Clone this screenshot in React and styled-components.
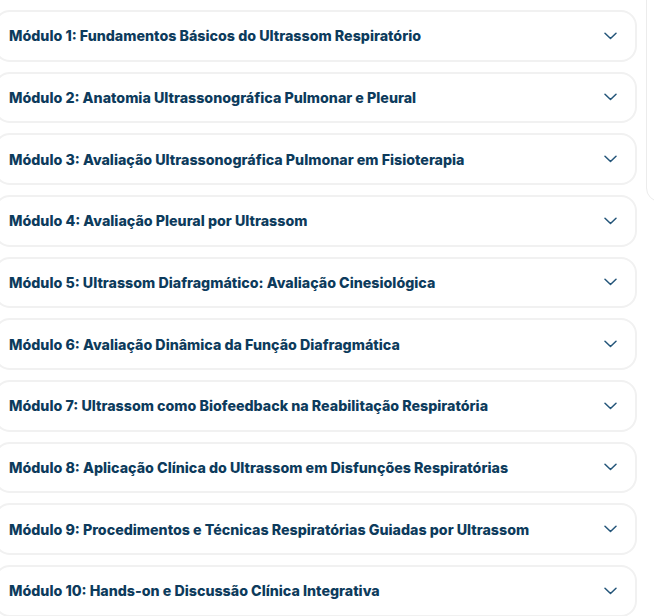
import React from 'react'
import styled, { createGlobalStyle } from 'styled-components'

const Global = createGlobalStyle`
  body {
    margin: 0;
    background: #ffffff;
    overflow: hidden;
    font-family: Inter, "Noto Sans", sans-serif;
  }
`

const Viewport = styled.div`
  width: 654px;
  height: 616px;
  overflow: hidden;
`

const Page = styled.div`
  display: flex;
  align-items: flex-start;
  gap: 9px;
  margin-left: -6px;
`

const List = styled.div`
  flex: 0 0 643px;
  display: flex;
  flex-direction: column;
  gap: 10px;
  padding-top: 10px;
`

const Item = styled.div`
  box-sizing: border-box;
  height: 51.67px;
  border: 2px solid #f1f1f1;
  border-radius: 16px;
  background: #fff;
  display: flex;
  align-items: center;
  justify-content: space-between;
  padding: 0 18px 0 13px;
  cursor: pointer;
`

const Title = styled.h3`
  margin: 0;
  font-family: Inter, "Noto Sans", sans-serif;
  font-weight: 800;
  font-size: 14.25px;
  letter-spacing: 0;
  color: #0d3b5c;
`

const Side = styled.aside`
  flex: 0 0 240px;
  box-sizing: border-box;
  height: 222px;
  margin-top: -20px;
  border: 1px solid #ececec;
  border-radius: 14px;
`

const Chevron = () =>
  <svg width="13" height="8" viewBox="0 0 13 8" fill="none">
    <path d="M1 1.2 6.5 6.5 12 1.2" stroke="#25567a" strokeWidth="1.5" strokeLinecap="round" strokeLinejoin="round" />
  </svg>

const modules = [
  'Módulo 1: Fundamentos Básicos do Ultrassom Respiratório',
  'Módulo 2: Anatomia Ultrassonográfica Pulmonar e Pleural',
  'Módulo 3: Avaliação Ultrassonográfica Pulmonar em Fisioterapia',
  'Módulo 4: Avaliação Pleural por Ultrassom',
  'Módulo 5: Ultrassom Diafragmático: Avaliação Cinesiológica',
  'Módulo 6: Avaliação Dinâmica da Função Diafragmática',
  'Módulo 7: Ultrassom como Biofeedback na Reabilitação Respiratória',
  'Módulo 8: Aplicação Clínica do Ultrassom em Disfunções Respiratórias',
  'Módulo 9: Procedimentos e Técnicas Respiratórias Guiadas por Ultrassom',
  'Módulo 10: Hands-on e Discussão Clínica Integrativa'
]

const App = () =>
  <>
    <Global />
    <Viewport>
      <Page>
        <List>
          {modules.map(m =>
            <Item key={m}>
              <Title>{m}</Title>
              <Chevron />
            </Item>
          )}
        </List>
        <Side />
      </Page>
    </Viewport>
  </>

export default App
